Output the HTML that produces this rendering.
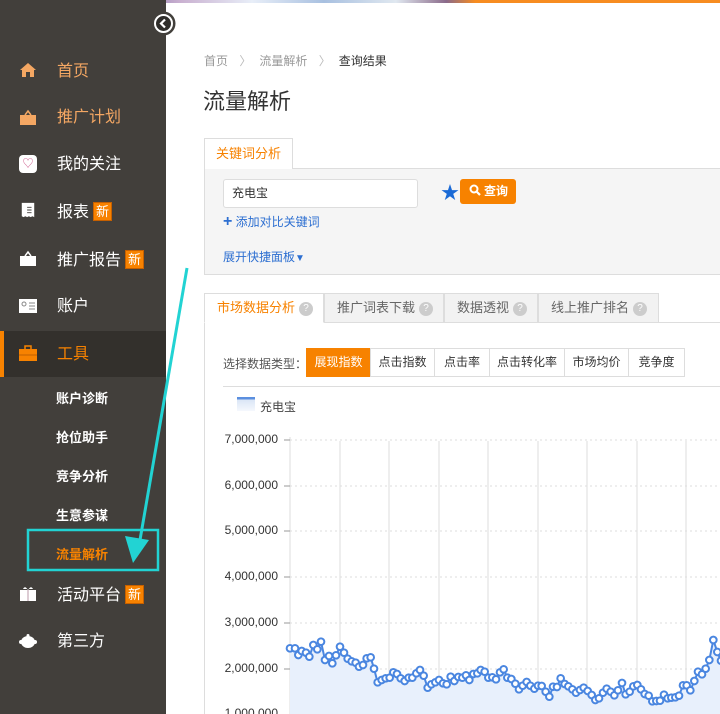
<!DOCTYPE html>
<html><head><meta charset="utf-8"><style>
*{margin:0;padding:0;box-sizing:border-box}
html,body{width:720px;height:714px;overflow:hidden}
body{background:#fff;font-family:"Liberation Sans","Noto Sans CJK SC",sans-serif;position:relative}
.a{position:absolute;white-space:nowrap}
#side{position:absolute;left:0;top:0;width:166px;height:714px;background:#423f3b}
.it{position:absolute;left:57px;font-size:16px;color:#fff;line-height:20px}
.ic{position:absolute;left:19px;width:18px;height:16px}
.new{display:inline-block;background:#f78200;color:#fff;font-size:13px;line-height:17px;padding:0 2px;margin-left:4px;vertical-align:1px;border:1px solid #c66000}
.sub{position:absolute;left:56px;font-size:13px;font-weight:bold;color:#fff}
.grey{color:#999}
.tab{position:absolute;top:293px;height:30px;border:1px solid #ddd;background:#f2f2f2;font-size:13px;color:#666;line-height:28px;padding-left:12px}
.q{display:inline-block;width:14px;height:14px;border-radius:7px;background:#ccc;color:#fff;font-size:10px;line-height:14px;text-align:center;margin-left:4px;vertical-align:1px}
.bt{position:absolute;top:348px;height:29px;border:1px solid #ddd;font-size:12px;color:#333;line-height:27px;text-align:center;background:#fff}
.yl{position:absolute;left:220px;width:58px;text-align:right;font-size:12px;color:#333}
</style></head><body>
<div class="a" style="left:0;top:0;width:720px;height:3px;background:linear-gradient(90deg,#3a3c6a 0,#6a5a9a 15%,#c9b0d0 25%,#e8eef8 35%,#a8c0e0 45%,#e0e8f0 55%,#8a6a8a 62%,#f78c20 66%,#f78c20 100%)"></div>
<div id="side">
 <svg class="ic" style="top:62px" viewBox="0 0 18 16"><path d="M9 1L1 8h2v7h12V8h2z" fill="#f4a763"/><rect x="7" y="10" width="4" height="5" fill="#423f3b"/></svg>
 <div class="it" style="top:62px;color:#f4a763">首页</div>
 <svg class="ic" style="top:109px" viewBox="0 0 18 16"><path d="M1 6h16v10H1z" fill="#f4a763"/><path d="M6 6L9 2l3 4" stroke="#f4a763" fill="none" stroke-width="1.5"/></svg>
 <div class="it" style="top:108px;color:#f4a763">推广计划</div>
 <div class="ic" style="top:155px;background:#fff;border-radius:4px;width:18px;height:18px;color:#c58;font-size:11px;text-align:center;line-height:18px">♡</div>
 <div class="it" style="top:155px">我的关注</div>
 <svg class="ic" style="top:202px" viewBox="0 0 18 18"><path d="M2 1h14v16l-2-1-2 1-2-1-2 1-2-1-2 1-2-1z" fill="#fff"/><path d="M8 6h5M8 9h5M8 12h5" stroke="#423f3b"/></svg>
 <div class="it" style="top:202px">报表<span class="new">新</span></div>
 <svg class="ic" style="top:250px" viewBox="0 0 18 16"><path d="M1 6h16v10H1z" fill="#fff"/><path d="M6 6L9 2l3 4" stroke="#fff" fill="none" stroke-width="1.5"/></svg>
 <div class="it" style="top:250px">推广报告<span class="new">新</span></div>
 <svg class="ic" style="top:298px" viewBox="0 0 18 16"><rect x="0" y="1" width="18" height="14" fill="#fff"/><circle cx="5" cy="6" r="2" fill="none" stroke="#888"/><path d="M10 5h6M10 8h6M10 11h6" stroke="#888"/></svg>
 <div class="it" style="top:297px">账户</div>
 <div class="a" style="left:0;top:331px;width:166px;height:46px;background:#33302c"></div>
 <div class="a" style="left:0;top:331px;width:4px;height:46px;background:#f78200"></div>
 <svg class="ic" style="top:345px" viewBox="0 0 18 16"><rect x="0" y="4" width="18" height="12" fill="#f78200"/><rect x="6" y="1" width="6" height="4" fill="none" stroke="#f78200" stroke-width="1.5"/><path d="M0 10h18" stroke="#c06000"/></svg>
 <div class="it" style="top:345px;color:#f78200">工具</div>
 <div class="sub" style="top:388px">账户诊断</div>
 <div class="sub" style="top:427px">抢位助手</div>
 <div class="sub" style="top:466px">竞争分析</div>
 <div class="sub" style="top:505px">生意参谋</div>
 <div class="sub" style="top:544px;color:#f78200">流量解析</div>
 <svg class="ic" style="top:585px" viewBox="0 0 18 16"><rect x="1" y="5" width="16" height="11" fill="#fff"/><path d="M9 5v11" stroke="#b9a"/><path d="M4 4q2-4 5 1q3-5 5-1" fill="#fff"/></svg>
 <div class="it" style="top:585px">活动平台<span class="new">新</span></div>
 <svg class="ic" style="top:633px" viewBox="0 0 18 16"><ellipse cx="9" cy="9" rx="7" ry="6" fill="#fff"/><circle cx="2" cy="9" r="2" fill="#fff"/><circle cx="16" cy="9" r="2" fill="#fff"/><circle cx="9" cy="2.5" r="1.5" fill="#fff"/></svg>
 <div class="it" style="top:632px">第三方</div>
</div>
<svg class="a" style="left:151px;top:11px" width="25" height="25" viewBox="0 0 25 25"><circle cx="12.5" cy="12.5" r="12" fill="#423f3b"/><circle cx="12.5" cy="12.5" r="8.5" fill="#2f2d2a" stroke="#fff" stroke-width="2"/><path d="M14 8.5L10 12.5L14 16.5" stroke="#fff" stroke-width="2.2" fill="none"/></svg>
<div class="a grey" style="left:204px;top:52px;font-size:12px">首页 <span style="margin:0 8px;color:#bbb">〉</span>流量解析 <span style="margin:0 8px;color:#bbb">〉</span><span style="color:#333">查询结果</span></div>
<div class="a" style="left:203px;top:84px;font-size:22px;color:#333">流量解析</div>
<div class="a" style="left:204px;top:138px;width:89px;height:31px;border:1px solid #ddd;border-bottom:none;background:#fff;color:#f78200;font-size:13px;line-height:30px;text-align:center;z-index:2">关键词分析</div>
<div class="a" style="left:204px;top:168px;width:530px;height:107px;background:#f5f5f5;border:1px solid #ddd"></div>
<div class="a" style="left:223px;top:179px;width:195px;height:29px;background:#fff;border:1px solid #ddd;border-radius:3px;font-size:12px;color:#333;line-height:27px;padding-left:8px">充电宝</div>
<div class="a" style="left:441px;top:179px;color:#1a6ad6;font-size:18px">★</div>
<div class="a" style="left:460px;top:179px;width:56px;height:25px;background:#f78200;border-radius:3px;color:#fff;font-size:12px;line-height:25px;font-weight:bold;padding-left:9px"><svg width="12" height="12" viewBox="0 0 12 12" style="vertical-align:-1px;margin-right:3px"><circle cx="5" cy="5" r="3.5" stroke="#fff" stroke-width="2" fill="none"/><path d="M7.5 7.5L11 11" stroke="#fff" stroke-width="2.2"/></svg>查询</div>
<div class="a" style="left:223px;top:213px;font-size:12px;color:#2d6fd1"><b style="font-size:16px">+</b> 添加对比关键词</div>
<div class="a" style="left:223px;top:248px;font-size:12px;color:#2d6fd1">展开快捷面板<span style="font-size:10px">▼</span></div>
<div class="a" style="left:204px;top:322px;width:530px;height:400px;border:1px solid #ddd;border-right:none"></div>
<div class="tab" style="left:204px;width:120px;background:#fff;color:#f78200;border-bottom-color:#fff">市场数据分析<span class="q">?</span></div>
<div class="tab" style="left:324px;width:120px">推广词表下载<span class="q">?</span></div>
<div class="tab" style="left:444px;width:94px">数据透视<span class="q">?</span></div>
<div class="tab" style="left:538px;width:121px">线上推广排名<span class="q">?</span></div>
<div class="a" style="left:223px;top:355px;font-size:12px;color:#555">选择数据类型：</div>
<div class="bt" style="left:306px;width:65px;background:#f78200;border-color:#f78200;color:#fff">展现指数</div>
<div class="bt" style="left:370px;width:65px">点击指数</div>
<div class="bt" style="left:434px;width:56px">点击率</div>
<div class="bt" style="left:489px;width:76px">点击转化率</div>
<div class="bt" style="left:564px;width:65px">市场均价</div>
<div class="bt" style="left:628px;width:57px">竞争度</div>
<div class="a" style="left:223px;top:386px;width:497px;height:1px;background:#ddd"></div>
<div class="a" style="left:237px;top:397px;width:18px;height:14px;background:linear-gradient(#5b8fdf 0,#5b8fdf 2px,#dbe6f6 3px,#f5f8fd)"></div>
<div class="a" style="left:260px;top:398px;font-size:12px;color:#444">充电宝</div>
<div class="yl" style="top:432px">7,000,000</div>
<div class="yl" style="top:478px">6,000,000</div>
<div class="yl" style="top:523px">5,000,000</div>
<div class="yl" style="top:569px">4,000,000</div>
<div class="yl" style="top:615px">3,000,000</div>
<div class="yl" style="top:661px">2,000,000</div>
<div class="yl" style="top:706px">1,000,000</div>
<svg class="a" style="left:0;top:0" width="720" height="714">
<g stroke="#ddd" stroke-dasharray="2,3"><path d="M290 440H720M290 486H720M290 531H720M290 577H720M290 623H720M290 669H720"/></g>
<g stroke="#ddd"><path d="M290 437V714M340 441V714M389 441V714M439 441V714M488 441V714M538 441V714M587 441V714M637 441V714M686 441V714"/><path d="M284 440h6M284 486h6M284 531h6M284 577h6M284 623h6M284 669h6" stroke="#999"/></g>
<g transform="translate(200,420) scale(0.33333)">
<polygon fill="#e8f0fc" points="270,685 285,685 295,705 305,693 318,698 328,710 340,675 352,688 363,665 375,720 387,708 397,730 408,706 420,680 432,698 443,716 455,724 467,728 477,740 489,735 500,715 512,712 522,746 533,787 545,780 557,775 569,773 580,757 591,762 602,775 614,783 626,773 637,773 649,760 660,750 671,767 683,803 694,793 706,787 717,780 729,790 740,793 752,770 763,783 775,771 787,773 798,766 808,780 820,762 832,760 842,750 854,755 865,773 877,772 888,778 900,757 911,748 922,773 934,777 946,791 957,808 968,797 980,786 991,797 1003,806 1014,797 1025,798 1037,815 1048,830 1059,800 1071,801 1082,775 1094,792 1105,799 1117,808 1128,818 1140,810 1151,803 1163,813 1175,825 1186,840 1197,835 1209,818 1220,806 1232,815 1243,826 1254,811 1266,789 1277,823 1289,815 1300,799 1312,795 1323,808 1334,822 1346,827 1357,844 1369,843 1380,842 1392,824 1403,835 1414,833 1426,832 1437,827 1449,796 1460,796 1471,811 1483,783 1494,755 1506,763 1517,746 1528,720 1540,660 1552,696 1563,722 1563,900 270,900"/>
<polyline id="ln" fill="none" stroke="#4a86e0" stroke-width="6" points="270,685 285,685 295,705 305,693 318,698 328,710 340,675 352,688 363,665 375,720 387,708 397,730 408,706 420,680 432,698 443,716 455,724 467,728 477,740 489,735 500,715 512,712 522,746 533,787 545,780 557,775 569,773 580,757 591,762 602,775 614,783 626,773 637,773 649,760 660,750 671,767 683,803 694,793 706,787 717,780 729,790 740,793 752,770 763,783 775,771 787,773 798,766 808,780 820,762 832,760 842,750 854,755 865,773 877,772 888,778 900,757 911,748 922,773 934,777 946,791 957,808 968,797 980,786 991,797 1003,806 1014,797 1025,798 1037,815 1048,830 1059,800 1071,801 1082,775 1094,792 1105,799 1117,808 1128,818 1140,810 1151,803 1163,813 1175,825 1186,840 1197,835 1209,818 1220,806 1232,815 1243,826 1254,811 1266,789 1277,823 1289,815 1300,799 1312,795 1323,808 1334,822 1346,827 1357,844 1369,843 1380,842 1392,824 1403,835 1414,833 1426,832 1437,827 1449,796 1460,796 1471,811 1483,783 1494,755 1506,763 1517,746 1528,720 1540,660 1552,696 1563,722"/>
<g id="dots" fill="#fff" stroke="#4a86e0" stroke-width="6"></g>
</g>
<rect x="28" y="530" width="130" height="40" fill="none" stroke="#22d3d3" stroke-width="2.5"/>
<path d="M187 268L140 540" stroke="#22d3d3" stroke-width="3"/>
<path d="M125 536L133 563L149 540Z" fill="#22d3d3"/>
</svg>
<script>
var p=document.getElementById('ln').getAttribute('points').trim().split(/\s+/),g=document.getElementById('dots'),s='';
p.forEach(function(q){var c=q.split(',');s+='<circle cx="'+c[0]+'" cy="'+c[1]+'" r="10"/>';});
g.innerHTML=s;
</script>
</body></html>
